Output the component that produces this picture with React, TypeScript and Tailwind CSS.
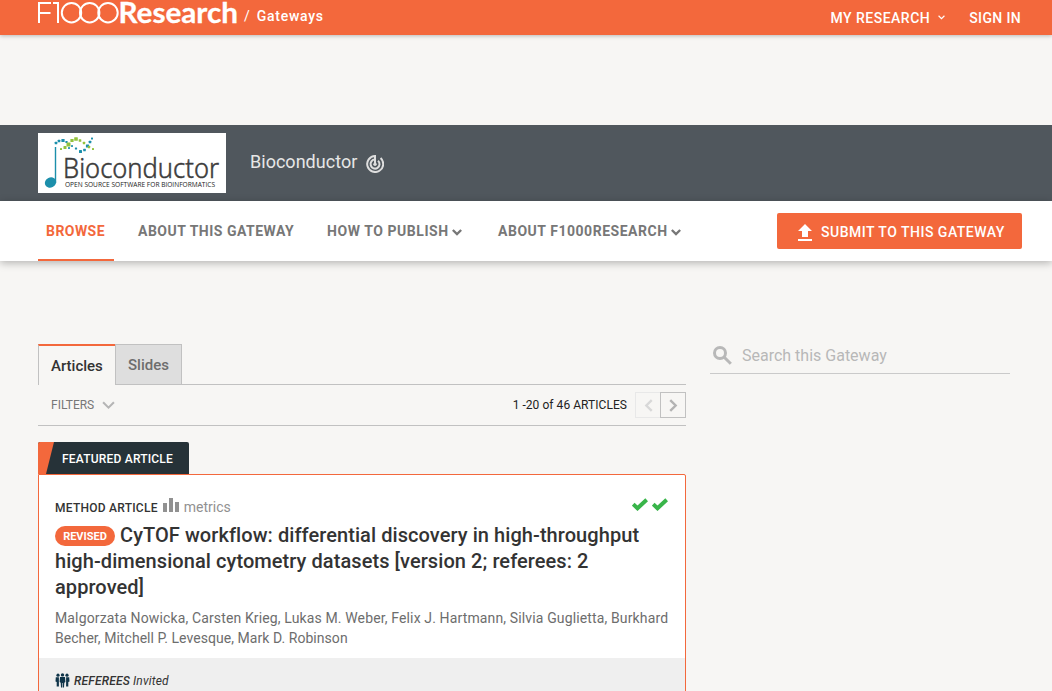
import React from "react";

function Chevron({ className, w = 2 }: { className: string; w?: number }) {
  return (
    <svg viewBox="0 0 12 8" className={className} fill="none" stroke="currentColor" strokeWidth={w}>
      <path d="M1 1l5 5 5-5" />
    </svg>
  );
}

function BrandLogo() {
  return (
    <svg width="200" height="32" viewBox="0 0 200 32" className="shrink-0 overflow-visible" fill="none" stroke="#fff" strokeWidth="2">
      <path d="M1 23V3H13M1 13H12.5" />
      <path d="M15 3H20V23" />
      <circle cx="33.5" cy="12.7" r="9.7" />
      <circle cx="51.7" cy="12.7" r="9.7" />
      <circle cx="70" cy="12.7" r="9.7" />
      <text x="80.5" y="22.8" fill="#fff" stroke="#fff" strokeWidth="0.3" fontFamily="Lato, sans-serif" fontWeight="700" fontSize="28" textLength="119.5" lengthAdjust="spacingAndGlyphs">
        Research
      </text>
    </svg>
  );
}

function TrackIcon() {
  return (
    <svg width="18" height="18" viewBox="0 0 18 18" className="mt-[22px] ml-[9px] shrink-0" fill="none" stroke="#dedede" strokeWidth="2">
      <path d="M14.6 3.1A8 8 0 1 1 9 1V9" />
      <path d="M12 5.7A4.5 4.5 0 1 1 9 4.6" />
      <circle cx="9" cy="9.2" r="1.7" fill="#dedede" stroke="none" />
    </svg>
  );
}

const helix: [number, number, number, string][] = [
  [18, 10, 2.6, "#1c8fab"], [21, 8, 2.6, "#1c8fab"], [25, 7.5, 3.2, "#1c8fab"], [28.5, 9, 2.2, "#1c8fab"],
  [31, 15, 1.8, "#1c8fab"], [34, 13, 1.8, "#1c8fab"], [38, 15.5, 2.2, "#1c8fab"], [42.5, 18.5, 3, "#1c8fab"],
  [46.5, 17, 2.6, "#1c8fab"], [49.5, 13, 3.2, "#1c8fab"], [52, 9, 2.6, "#1c8fab"], [54, 5.5, 2, "#1c8fab"],
  [23, 16, 2, "#93c23d"], [27, 14.5, 3, "#93c23d"], [30.5, 11.5, 4, "#93c23d"], [34, 7.5, 3.2, "#93c23d"],
  [38, 6, 3.6, "#93c23d"], [42, 7.5, 2.6, "#93c23d"], [46, 10, 2.4, "#93c23d"], [51, 14, 2.4, "#93c23d"],
  [55, 16, 2, "#93c23d"],
];

function BioconductorLogo() {
  return (
    <svg width="188" height="60" viewBox="0 0 188 60" className="shrink-0 overflow-visible bg-white">
      <path d="M17.5 14V50" stroke="#1c8fab" strokeWidth="1.4" />
      <ellipse cx="12.5" cy="49.5" rx="5.8" ry="5" fill="#1c8fab" transform="rotate(-25 12.5 49.5)" />
      {helix.map(([x, y, s, c], i) => (
        <rect key={i} x={x - s / 2} y={y - s / 2} width={s} height={s} rx="0.5" fill={c} />
      ))}
      <text x="25" y="44.5" fill="#3c3c3c" fontFamily="'Noto Sans', sans-serif" fontWeight="300" stroke="#3c3c3c" strokeWidth="0.5" fontSize="28" textLength="156" lengthAdjust="spacingAndGlyphs">
        Bioconductor
      </text>
      <text x="27" y="53.7" fill="#222" fontFamily="'Open Sans', sans-serif" fontWeight="500" fontSize="6.4" textLength="150" lengthAdjust="spacingAndGlyphs">
        OPEN SOURCE SOFTWARE FOR BIOINFORMATICS
      </text>
    </svg>
  );
}

function Check() {
  return (
    <svg width="16" height="13" viewBox="0 0 16 13" fill="none" stroke="#39b54a" strokeWidth="4">
      <path d="M1.2 6.2L5.5 10.3L14.7 1.8" />
    </svg>
  );
}

function Referees() {
  return (
    <svg width="15" height="15" viewBox="0 0 15 15" fill="#0f3449">
      <circle cx="3" cy="2.2" r="1.6" />
      <circle cx="12" cy="2.2" r="1.6" />
      <path d="M.8 4.3h3.1v9.2H1.7V9L.5 8.4zM11.1 4.3h3.1l.3 4.1-1.2.6v4.5h-2.2z" />
      <circle cx="7.5" cy="1.9" r="1.7" />
      <path d="M5 4h5l.4 5-1.1.7L9 14.6H7.8V10h-.6v4.6H6L5.7 9.7 4.6 9z" />
    </svg>
  );
}

export default function App() {
  return (
    <div className="h-[691px] w-full overflow-hidden bg-[#f7f6f4] font-[Roboto,sans-serif] text-[#333]">
      <header className="flex h-[35px] items-start bg-[#f3683c] pr-[31px] pl-[38px] text-[14px] leading-[20px] font-medium text-white shadow-[0_1px_4px_rgba(0,0,0,0.25)]">
        <BrandLogo />
        <span className="mt-[6px] ml-[6px] font-normal">/</span>
        <span className="mt-[6px] ml-[7px] tracking-[0.73px]">Gateways</span>
        <span className="mt-[8px] ml-auto tracking-[0.5px]">MY RESEARCH</span>
        <Chevron className="mt-[15px] ml-[8px] h-[5px] w-[7px]" />
        <span className="mt-[8px] ml-[24px] tracking-[0.35px]">SIGN IN</span>
      </header>

      <section className="mt-[90px] flex h-[76px] items-start bg-[#50575d] pt-[8px] pl-[38px]">
        <BioconductorLogo />
        <h1 className="mt-[17px] ml-[24px] w-[107px] text-[18px] leading-[24px] tracking-[0.02px] text-[#e6e6e6]">Bioconductor</h1>
        <TrackIcon />
      </section>

      <nav className="flex h-[60px] items-start bg-white pr-[30px] pl-[38px] text-[14px] leading-[20px] font-bold text-[#777] shadow-[0_2px_8px_rgba(0,0,0,0.28)]">
        <div className="h-[60px] w-[76px] border-b-2 border-[#f3683c] pt-[20px] pl-[8px] tracking-[0.45px] text-[#f3683c]">BROWSE</div>
        <div className="w-[189px] pt-[20px] pl-[24px] tracking-[0.5px]">ABOUT THIS GATEWAY</div>
        <div className="flex w-[171px] pt-[20px] pl-[24px] tracking-[0.56px] whitespace-nowrap">
          HOW TO PUBLISH
          <Chevron className="mt-[8px] ml-[3px] h-[7px] w-[10px]" w={2.8} />
        </div>
        <div className="flex pt-[20px] pl-[24px] tracking-[0.53px] whitespace-nowrap">
          ABOUT F1000RESEARCH
          <Chevron className="mt-[8px] ml-[3px] h-[7px] w-[10px]" w={2.8} />
        </div>
        <button className="mt-[12px] ml-auto flex h-[36px] w-[245px] items-center rounded-[2px] bg-[#f3683c] pt-[2px] pl-[21px] font-medium tracking-[0.5px] whitespace-nowrap text-white">
          <svg width="14" height="17" viewBox="0 0 14 17" fill="currentColor" className="mr-[9px] shrink-0">
            <path d="M4 13V7H0L7 0l7 7h-4v6zM0 15h14v2H0z" />
          </svg>
          SUBMIT TO THIS GATEWAY
        </button>
      </nav>

      <main className="flex items-start pt-[82px] pl-[38px]">
        <div className="w-[648px]">
          <div className="flex h-[42px] items-start border-b border-[#c1c1c1] pt-[1px] text-[15px] leading-[20px] font-medium">
            <div className="h-[41px] w-[77px] border-t-2 border-l border-t-[#f3683c] border-l-[#c1c1c1] bg-[#f7f6f4] pt-[10px] pl-[12px]">Articles</div>
            <div className="h-[41px] w-[67px] border border-[#c1c1c1] bg-[#dedede] pt-[10px] pl-[12px] text-[#6d6d6d]">Slides</div>
          </div>
          <div className="flex h-[41px] items-center border-b border-[#c1c1c1] pl-[13px] text-[12px]">
            <span className="text-[#777]">FILTERS</span>
            <Chevron className="ml-[8px] h-[9px] w-[13px] text-[#b5b5b5]" w={1.9} />
            <span className="ml-auto tracking-[0.05px] text-[#222]">1 -20 of 46 ARTICLES</span>
            <div className="ml-[8px] flex">
              <div className="flex h-[26px] w-[25px] items-center justify-center border border-r-0 border-[#e8e8e8] text-[#d8d8d8]">
                <Chevron className="h-[9px] w-[13px] shrink-0 rotate-90" w={2.2} />
              </div>
              <div className="flex size-[26px] items-center justify-center border border-[#c1c1c1] text-[#b3b3b3]">
                <Chevron className="h-[9px] w-[13px] shrink-0 -rotate-90" w={2.2} />
              </div>
            </div>
          </div>

          <div className="mt-[16px] flex h-[32px] w-[151px] items-center overflow-hidden rounded-t-[2px] bg-[#263238] text-[12px] font-medium text-white">
            <div className="mr-[8px] h-full w-[16px] bg-[#f3683c] [clip-path:polygon(0_0,100%_0,50%_100%,0_100%)]" />
            <span className="pt-[2px] tracking-[0.2px] whitespace-nowrap">FEATURED ARTICLE</span>
          </div>
          <article className="h-[230px] rounded-tr-[2px] border border-[#f3683c] bg-white">
            <div className="flex h-[47px] items-end px-[16px] pb-[6px]">
              <span className="text-[12px] leading-[16px] font-medium tracking-[0.25px]">METHOD ARTICLE</span>
              <svg width="16" height="14" viewBox="0 0 16 14" fill="#919191" className="mb-[4px] ml-[5px]">
                <path d="M0 5h4v9H0zM6 0h4v14H6zM12 4h4v10h-4z" />
              </svg>
              <span className="ml-[5px] text-[14px] leading-[17px] text-[#919191]">metrics</span>
              <div className="mr-[1px] mb-[5px] ml-auto flex gap-[4px]">
                <Check />
                <Check />
              </div>
            </div>
            <h2 className="pl-[16px] text-[20px] leading-[26px] font-medium tracking-[0.07px] whitespace-nowrap">
              <span className="mt-[4px] mr-[5px] inline-flex h-[20px] w-[60px] items-center justify-center rounded-full bg-[#f3683c] align-top text-[11px] leading-none font-bold tracking-normal text-white">REVISED</span>
              CyTOF workflow: differential discovery in high-throughput
              <br />
              high-dimensional cytometry datasets [version 2; referees: 2
              <br />
              approved]
            </h2>
            <p className="mt-[8px] h-[50px] pl-[16px] text-[14px] leading-[20px] whitespace-nowrap text-[#6d6d6d]">
              <span className="tracking-[0.135px]">Malgorzata Nowicka, Carsten Krieg, Lukas M. Weber, Felix J. Hartmann, Silvia Guglietta, Burkhard</span>
              <br />
              <span className="tracking-[0.05px]">Becher, Mitchell P. Levesque, Mark D. Robinson</span>
            </p>
            <div className="flex h-[46px] items-start bg-[#efefef] pt-[15px] pl-[16px] text-[12px] leading-[16px] italic">
              <Referees />
              <span className="ml-[4px] font-medium tracking-[0.2px]">REFEREES</span>
              <span className="ml-[3px] tracking-[0.15px]">Invited</span>
            </div>
          </article>
        </div>

        <div className="ml-[24px] flex h-[31px] w-[300px] items-start border-b border-[#cacaca] text-[#b8b8b8]">
          <svg width="19" height="19" viewBox="0 0 19 19" fill="none" stroke="currentColor" strokeWidth="3" className="mt-[3px] ml-[3px]">
            <circle cx="7" cy="7" r="5.5" />
            <path d="M11 11l6.8 6.8" />
          </svg>
          <span className="ml-[10px] pt-[1px] text-[16px] leading-[24px]">Search this Gateway</span>
        </div>
      </main>
    </div>
  );
}
